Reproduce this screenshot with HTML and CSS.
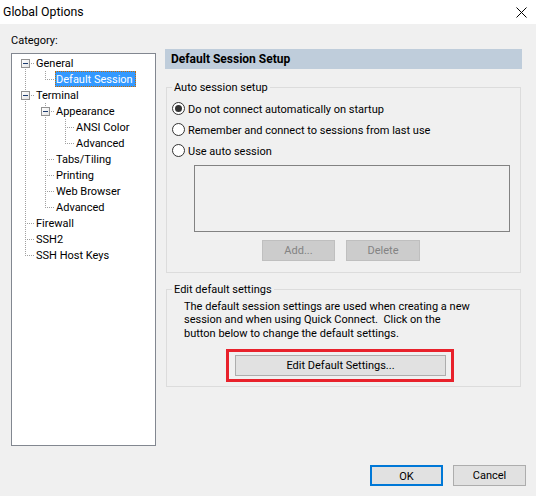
FILE: index.html
```html
<!DOCTYPE html>
<html>
<head>
<meta charset="utf-8">
<link rel="stylesheet" href="styles.css">
</head>
<body>
<div class="dialog">
  <div class="titlebar">
    <span class="title">Global Options</span>
    <svg class="close" width="11" height="11" viewBox="0 0 11 11"><path d="M0.5 0.5 L10.5 10.5 M10.5 0.5 L0.5 10.5" stroke="#000" stroke-width="1" fill="none"/></svg>
  </div>
  <div class="body">
    <div class="left">
      <div class="cat-label">Category:</div>
      <div class="tree">
        <div class="row"><span class="g g-f"><span class="box"></span></span><span class="item">General</span></div>
        <div class="row"><span class="g g-i"></span><span class="g g-l"></span><span class="item sel">Default Session</span></div>
        <div class="row"><span class="g g-t"><span class="box"></span></span><span class="item">Terminal</span></div>
        <div class="row"><span class="g g-i"></span><span class="g g-t"><span class="box"></span></span><span class="item">Appearance</span></div>
        <div class="row"><span class="g g-i"></span><span class="g g-i"></span><span class="g g-t"></span><span class="item">ANSI Color</span></div>
        <div class="row"><span class="g g-i"></span><span class="g g-i"></span><span class="g g-l"></span><span class="item">Advanced</span></div>
        <div class="row"><span class="g g-i"></span><span class="g g-t"></span><span class="item">Tabs/Tiling</span></div>
        <div class="row"><span class="g g-i"></span><span class="g g-t"></span><span class="item">Printing</span></div>
        <div class="row"><span class="g g-i"></span><span class="g g-t"></span><span class="item">Web Browser</span></div>
        <div class="row"><span class="g g-i"></span><span class="g g-l"></span><span class="item">Advanced</span></div>
        <div class="row"><span class="g g-t"></span><span class="item">Firewall</span></div>
        <div class="row"><span class="g g-t"></span><span class="item">SSH2</span></div>
        <div class="row"><span class="g g-l"></span><span class="item">SSH Host Keys</span></div>
      </div>
    </div>
    <div class="right">
      <div class="header">Default Session Setup</div>
      <fieldset class="group g1">
        <legend>Auto session setup</legend>
        <div class="radio-row"><span class="radio checked"></span><span class="rlabel">Do not connect automatically on startup</span></div>
        <div class="radio-row"><span class="radio"></span><span class="rlabel">Remember and connect to sessions from last use</span></div>
        <div class="radio-row"><span class="radio"></span><span class="rlabel">Use auto session</span></div>
        <div class="listbox"></div>
        <div class="btn-row">
          <button class="btn disabled add">Add...</button>
          <button class="btn disabled del">Delete</button>
        </div>
      </fieldset>
      <fieldset class="group g2">
        <legend>Edit default settings</legend>
        <p class="desc">The default session settings are used when creating a new<br>session and when using Quick Connect.&nbsp; Click on the<br>button below to change the default settings.</p>
        <div class="mark">
          <button class="btn wide">Edit Default Settings...</button>
        </div>
      </fieldset>
    </div>
  </div>
  <div class="footer">
    <button class="btn default">OK</button>
    <button class="btn">Cancel</button>
  </div>
</div>
</body>
</html>
```
FILE: styles.css
```css
* { box-sizing: border-box; }
html, body { margin: 0; padding: 0; }
body {
  background: #f0f0f0;
  font-family: Roboto, "Liberation Sans", sans-serif;
  font-size: 11px;
  color: #000;
}
.dialog {
  width: 536px;
  height: 496px;
  display: flex;
  flex-direction: column;
  overflow: hidden;
}
.titlebar {
  height: 24px;
  background: #fff;
  display: flex;
  align-items: center;
  justify-content: space-between;
  padding: 0 9px 0 3px;
}
.title { font-size: 12.3px; line-height: 22px; }
.close { display: block; margin-top: 1px; }
.body {
  display: flex;
  gap: 9px;
  padding: 8px 14px 0 11px;
}
.left { width: 145px; }
.cat-label { line-height: 16px; height: 16px; margin-bottom: 5px; padding-top: 1px; }
.tree {
  height: 393px;
  background: #fff;
  border: 1px solid #828790;
  padding: 1px 0 0 3px;
}
.row { display: flex; height: 16px; align-items: stretch; }
.g {
  width: 20px;
  flex: 0 0 20px;
  display: flex;
  align-items: center;
  justify-content: center;
  background-repeat: no-repeat;
}
.g-i {
  background-image: repeating-linear-gradient(to bottom, #a0a0a0 0 1px, transparent 1px 2px);
  background-size: 1px 16px;
  background-position: 10px 0;
}
.g-t {
  background-image:
    repeating-linear-gradient(to bottom, #a0a0a0 0 1px, transparent 1px 2px),
    repeating-linear-gradient(to right, #a0a0a0 0 1px, transparent 1px 2px);
  background-size: 1px 16px, 10px 1px;
  background-position: 10px 0, 10px 8px;
}
.g-l {
  background-image:
    repeating-linear-gradient(to bottom, #a0a0a0 0 1px, transparent 1px 2px),
    repeating-linear-gradient(to right, #a0a0a0 0 1px, transparent 1px 2px);
  background-size: 1px 9px, 10px 1px;
  background-position: 10px 0, 10px 8px;
}
.g-f {
  background-image:
    repeating-linear-gradient(to bottom, #a0a0a0 0 1px, transparent 1px 2px),
    repeating-linear-gradient(to right, #a0a0a0 0 1px, transparent 1px 2px);
  background-size: 1px 8px, 10px 1px;
  background-position: 10px 8px, 10px 8px;
}
.box {
  width: 9px;
  height: 9px;
  border: 1px solid #919191;
  background: linear-gradient(to bottom right, #fff, #e4e4e4);
  display: flex;
  align-items: center;
  justify-content: center;
  margin-left: 1px;
}
.box::before {
  content: "";
  width: 5px;
  height: 1px;
  background: #1c3b6e;
}
.item {
  line-height: 15px;
  padding: 1px 2px 0 1px;
  white-space: nowrap;
}
.item.sel {
  background: #3399ff;
  color: #fff;
  border: 1px dotted #c86a00;
  padding: 1px 2px 0 0;
  line-height: 13px;
}
.right { width: 357px; padding-top: 17px; }
.header {
  height: 20px;
  line-height: 21px;
  background: #bfcddb;
  font-weight: bold;
  font-size: 12px;
  padding-left: 6px;
}
.group {
  margin: 0 1px;
  padding: 0;
  border: 1px solid #dcdcdc;
  min-width: 0;
}
.group legend {
  margin-left: 5px;
  padding: 1px 2px 0;
  line-height: 15px;
}
.g1 { margin-top: 10px; padding-top: 3px; padding-bottom: 11px; }
.g2 { margin-top: 8px; padding-top: 2px; padding-bottom: 4px; }
.radio-row {
  height: 21px;
  display: flex;
  align-items: center;
  padding-left: 5px;
  gap: 3px;
}
.rlabel { padding-top: 2px; }
.radio {
  width: 13px;
  height: 13px;
  border: 1px solid #333;
  border-radius: 50%;
  background: #fff;
  display: flex;
  align-items: center;
  justify-content: center;
}
.radio.checked::before {
  content: "";
  width: 7px;
  height: 7px;
  border-radius: 50%;
  background: #333;
}
.listbox {
  margin: 4px 0 0 27px;
  width: 316px;
  height: 67px;
  border: 1px solid #828282;
  background: #f0f0f0;
}
.btn-row {
  display: flex;
  gap: 11px;
  margin: 8px 0 0 95px;
}
.btn {
  font-family: Roboto, "Liberation Sans", sans-serif;
  font-size: 11px;
  height: 21px;
  background: #e1e1e1;
  border: 1px solid #adadad;
  color: #000;
  padding: 1px 0 0;
  margin: 0;
  line-height: 18px;
}
.btn.disabled {
  background: #cccccc;
  border-color: #bfbfbf;
  color: #838383;
}
.add { width: 73px; }
.del { width: 74px; }
.desc {
  margin: 0 0 0 17px;
  padding-top: 1px;
  line-height: 13.4px;
  white-space: nowrap;
}
.mark {
  margin: 9px 0 0 59px;
  width: 228px;
  border: 3px solid #e8212b;
  padding: 3px 5px 3px 6px;
  display: flex;
}
.wide { width: 211px; }
.footer {
  display: flex;
  justify-content: flex-end;
  gap: 10px;
  padding-right: 10px;
  margin-top: 19px;
}
.footer .btn { width: 73px; }
.btn.default { border: 2px solid #0078d7; }
```
